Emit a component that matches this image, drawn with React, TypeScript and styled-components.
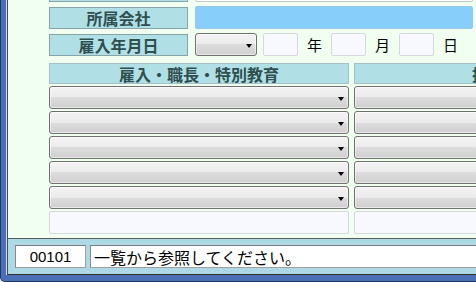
import styled, { createGlobalStyle, css } from 'styled-components';

const GlobalStyle = createGlobalStyle`
  html, body {
    margin: 0;
    padding: 0;
    background: #ffffff;
  }
  body {
    font-family: "Noto Sans CJK JP", "Liberation Sans", sans-serif;
  }
  * {
    box-sizing: border-box;
  }
`;

type FieldTone = 'white' | 'sky' | 'ghost';

const fieldTones = {
  white: css`
    background: #ffffff;
    border-color: #c4c8cc;
  `,
  sky: css`
    background: #87cefa;
    border-color: #9cc6e6;
  `,
  ghost: css`
    background: #f8f8ff;
    border-color: #d6d8de;
  `,
};

const Window = styled.div`
  width: 476px;
  height: 282px;
  display: flex;
  overflow: hidden;
  background: #4a6fb6;
  border-left: 1px solid #22365e;
  border-bottom: 1px solid #22365e;
  border-bottom-left-radius: 5px;
  padding: 0 0 6px 5px;
`;

const Client = styled.div`
  flex: 1;
  display: flex;
  min-width: 0;
  border-left: 1px solid #d4e0ee;
`;

const Body = styled.div`
  flex: 1;
  display: flex;
  flex-direction: column;
  min-width: 0;
  overflow: hidden;
  border-left: 1px solid #4a4a4a;
  border-bottom: 1px solid #2e2e2e;
`;

const Content = styled.div`
  height: 238px;
  overflow: hidden;
  background: #f0fff0;
  padding-left: 41px;
`;

// the form is scrolled: the row above 所属会社 only shows its bottom edge
const Form = styled.div`
  display: flex;
  flex-direction: column;
  gap: 4px;
  margin-top: -21px;
`;

const FieldRow = styled.div`
  display: flex;
  align-items: center;
  gap: 7px;
  height: 23px;
`;

const Label = styled.div`
  flex: 0 0 139px;
  height: 22px;
  display: flex;
  align-items: center;
  justify-content: center;
  background: #b0e0e6;
  border: 1px solid #86a4a8;
  color: #2f4f4f;
  font-size: 16px;
  font-weight: bold;
  line-height: 1;
`;

const TextField = styled.div<{ $tone: FieldTone; $width: number }>`
  flex: 0 0 ${(p) => p.$width}px;
  height: 23px;
  border: 1px solid;
  border-radius: 2px;
  ${(p) => fieldTones[p.$tone]}
`;

const DateField = styled.div`
  display: flex;
  align-items: center;
`;

const DateBox = styled(TextField)`
  margin-left: 6px;
`;

const DateUnit = styled.span`
  margin: 0 9px;
  font-size: 15px;
  line-height: 1;
  color: #000000;
`;

const Select = styled.div<{ $width?: number }>`
  position: relative;
  flex: 0 0 auto;
  width: ${(p) => (p.$width ? `${p.$width}px` : '100%')};
  height: 23px;
  border: 1px solid #707070;
  border-radius: 3px;
  background: linear-gradient(#f3f3f3, #ebebeb 50%, #dddddd 50%, #cfcfcf);
  box-shadow: inset 0 0 0 1px rgba(255, 255, 255, 0.55);

  &::after {
    content: '';
    position: absolute;
    right: 4px;
    top: 10px;
    border-left: 3px solid transparent;
    border-right: 3px solid transparent;
    border-top: 4px solid #000000;
  }
`;

const Grid = styled.div`
  display: grid;
  grid-template-columns: 300px 300px;
  column-gap: 5px;
  margin-top: 7px;
`;

const Column = styled.div`
  display: flex;
  flex-direction: column;
  gap: 2px;
`;

const Header = styled(Label)`
  flex: 0 0 auto;
  height: 21px;
  border-color: #a2c2c6;
  white-space: nowrap;
`;

const NoteField = styled.div`
  height: 23px;
  background: #f8f8ff;
  border: 1px solid #d6d8de;
  border-radius: 2px;
`;

const StatusBar = styled.div`
  height: 36px;
  display: flex;
  gap: 4px;
  padding: 6px 0 0 7px;
  background: #add8e6;
  border-top: 1px solid #5a5a5a;
`;

const StatusBox = styled.div<{ $wide?: boolean }>`
  flex: 0 0 ${(p) => (p.$wide ? '420px' : '71px')};
  height: 23px;
  display: flex;
  align-items: center;
  justify-content: ${(p) => (p.$wide ? 'flex-start' : 'center')};
  padding-left: ${(p) => (p.$wide ? '3px' : '0')};
  background: #ffffff;
  border: 1px solid #a0a0a0;
  border-top-color: #7c7c7c;
  border-left-color: #8a8a8a;
  color: #000000;
  font-family: ${(p) =>
    p.$wide ? '"Noto Sans CJK JP", sans-serif' : '"Liberation Sans", sans-serif'};
  font-size: ${(p) => (p.$wide ? '16px' : '15px')};
  line-height: 1;
  white-space: nowrap;
`;

const columns = [
  { title: '雇入・職長・特別教育' },
  { title: '技能講習' },
];

const App = () => {
  return (
    <>
      <GlobalStyle />
      <Window>
        <Client>
          <Body>
            <Content>
              <Form>
                <FieldRow>
                  <Label />
                  <TextField $tone="white" $width={278} />
                </FieldRow>
                <FieldRow>
                  <Label>所属会社</Label>
                  <TextField $tone="sky" $width={278} />
                </FieldRow>
                <FieldRow>
                  <Label>雇入年月日</Label>
                  <DateField>
                    <Select $width={62} />
                    <DateBox $tone="ghost" $width={35} />
                    <DateUnit>年</DateUnit>
                    <TextField $tone="ghost" $width={35} />
                    <DateUnit>月</DateUnit>
                    <TextField $tone="ghost" $width={35} />
                    <DateUnit>日</DateUnit>
                  </DateField>
                </FieldRow>
              </Form>
              <Grid>
                {columns.map((col) => (
                  <Column key={col.title}>
                    <Header>{col.title}</Header>
                    {[0, 1, 2, 3, 4].map((i) => (
                      <Select key={`${col.title}_${i}`} />
                    ))}
                    <NoteField />
                  </Column>
                ))}
              </Grid>
            </Content>
            <StatusBar>
              <StatusBox>00101</StatusBox>
              <StatusBox $wide>一覧から参照してください。</StatusBox>
            </StatusBar>
          </Body>
        </Client>
      </Window>
    </>
  );
};

export default App;
